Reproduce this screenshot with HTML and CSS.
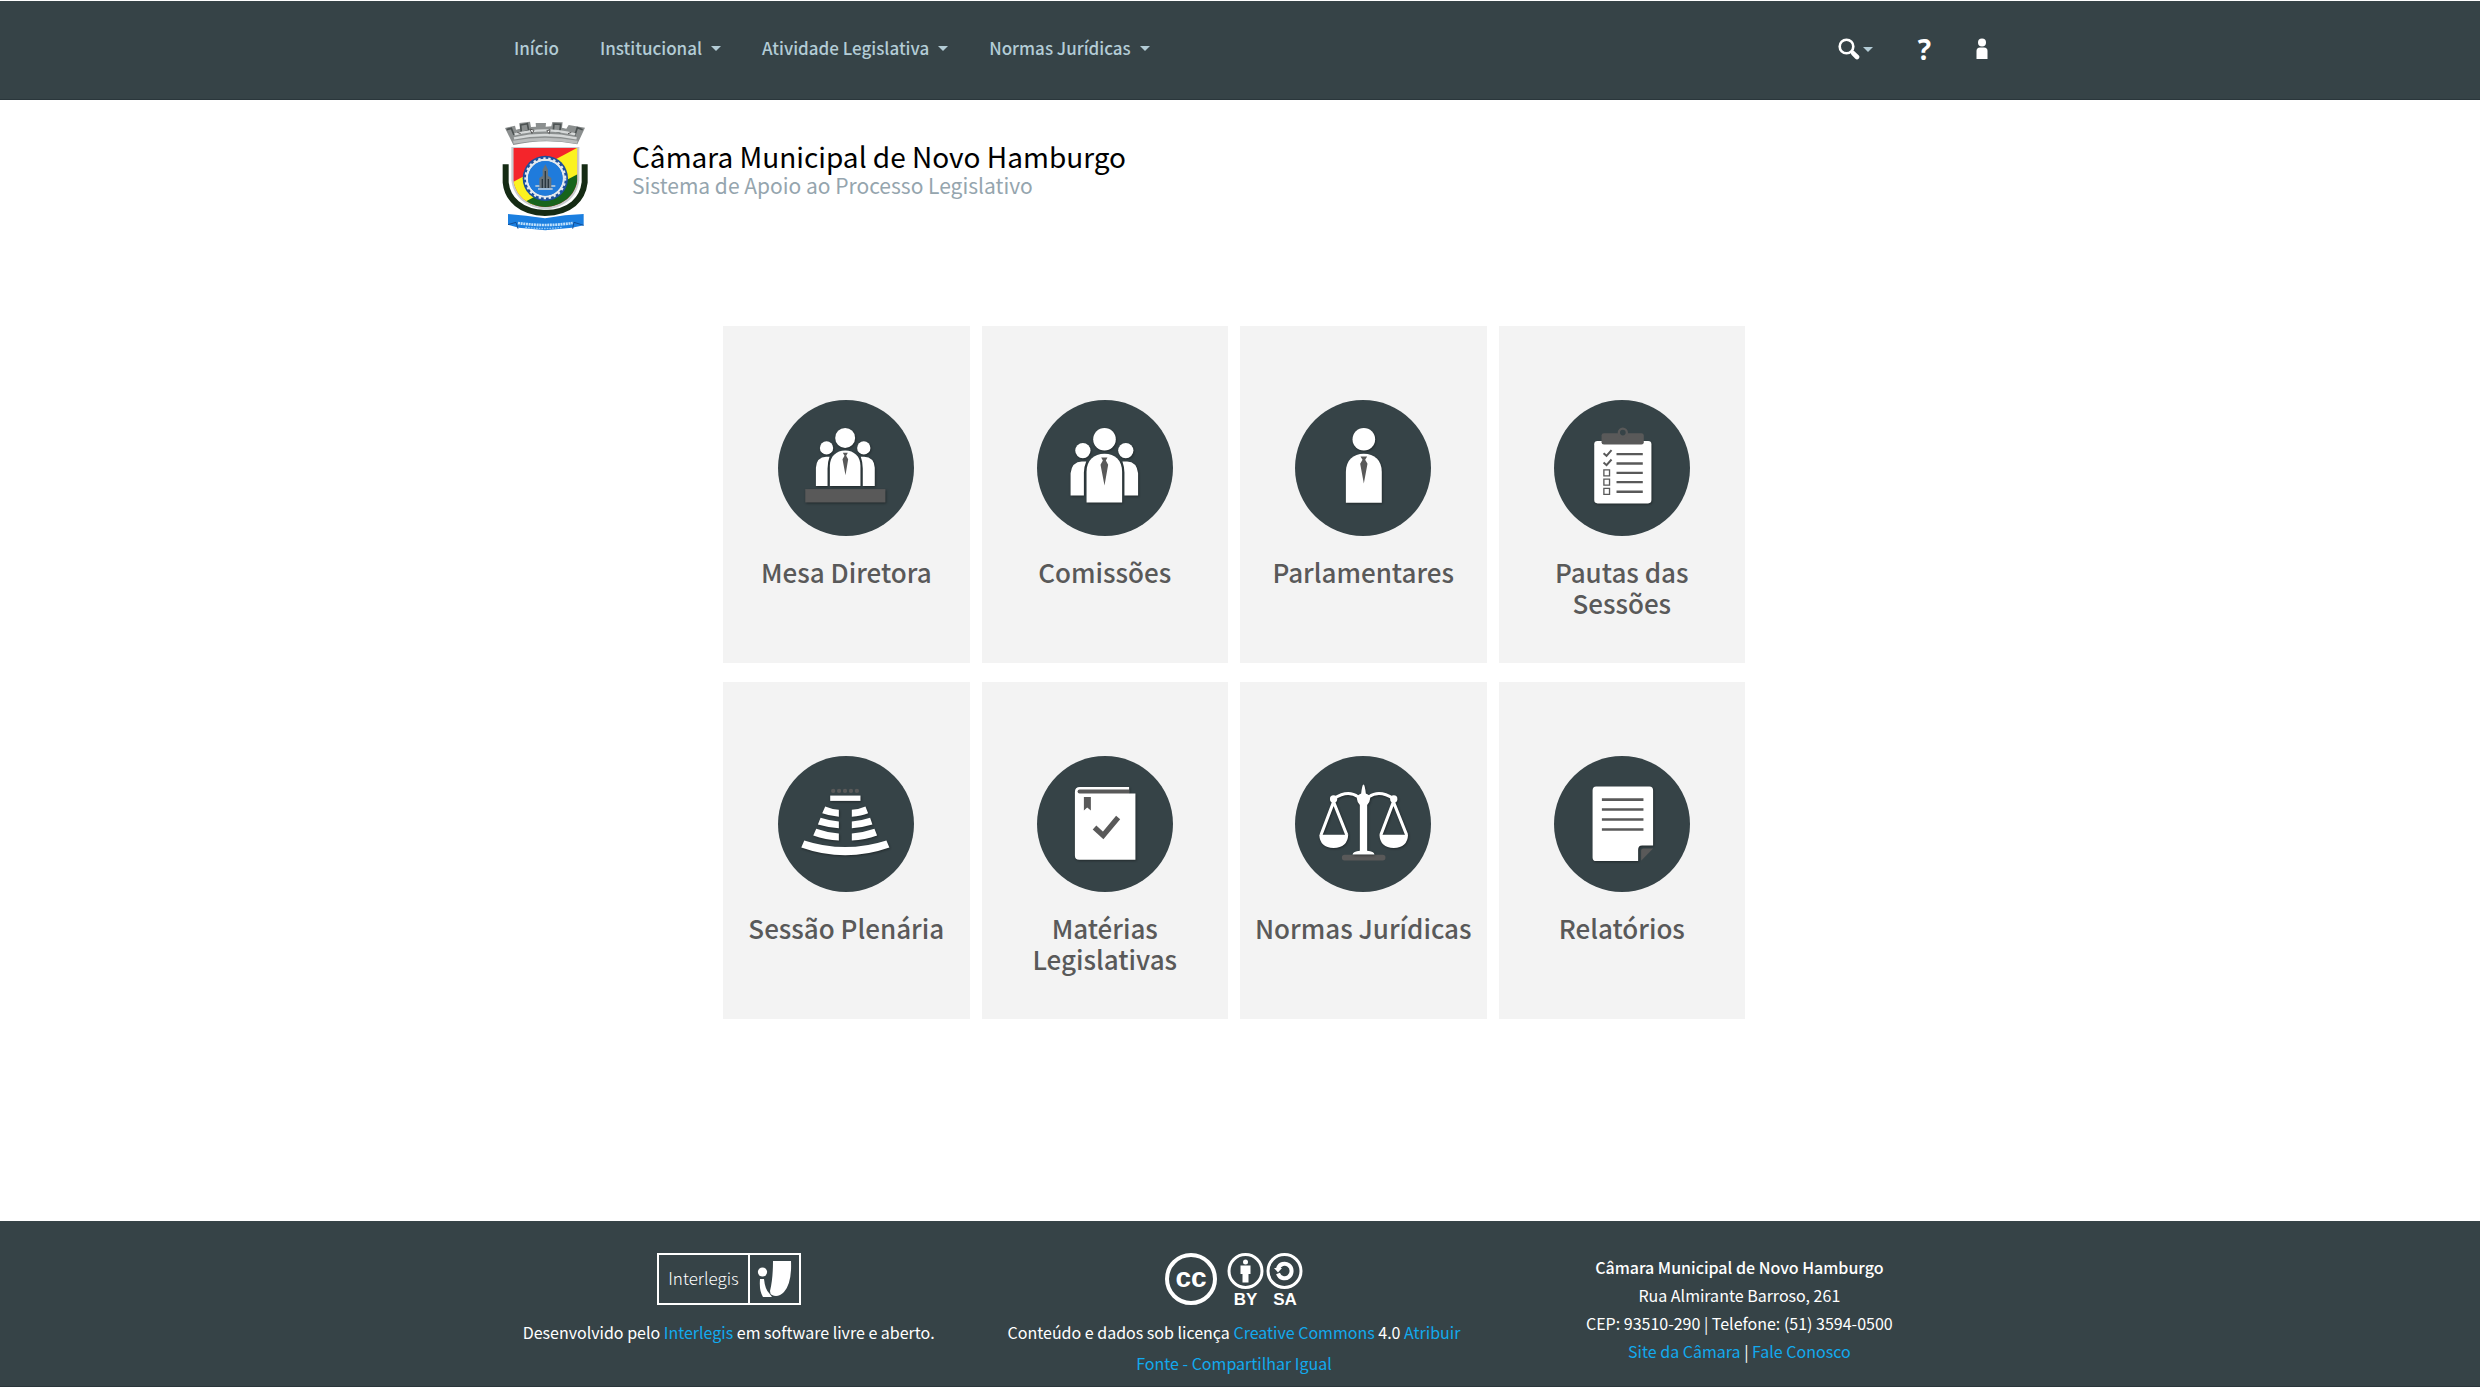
FILE: index.html
```
<!DOCTYPE html>
<html lang="pt-br">
<head>
<meta charset="utf-8">
<title>Câmara Municipal de Novo Hamburgo</title>
<link rel="stylesheet" href="styles.css">
</head>
<body>
<header class="navbar">
  <div class="container navbar-inner">
    <nav class="menu">
      <a href="#">Início</a>
      <a href="#">Institucional <span class="caret"></span></a>
      <a href="#">Atividade Legislativa <span class="caret"></span></a>
      <a href="#">Normas Jurídicas <span class="caret"></span></a>
    </nav>
    <nav class="tools">
      <a href="#" aria-label="Pesquisar"><svg width="22" height="22" viewBox="0 0 22 22"><circle cx="8.500" cy="8.500" r="6.800" fill="none" stroke="#fff" stroke-width="2.600"/><path d="M13 13L15 15" stroke="#fff" stroke-width="3"/><path d="M15.300 15.300L19 19" stroke="#fff" stroke-width="4.600" stroke-linecap="round"/></svg><span class="caret"></span></a>
      <a href="#" class="help" aria-label="Ajuda">?</a>
      <a href="#" aria-label="Entrar"><svg width="12" height="22" viewBox="0 0 12 22"><circle cx="6" cy="4.500" r="4" fill="#fff"/><path d="M0.500 21V13Q0.500 9.500 4 9.500H8Q11.500 9.500 11.500 13V21Z" fill="#fff"/></svg></a>
    </nav>
  </div>
</header>

<div class="container brand">
  <svg class="crest" viewBox="30 25 270 345" role="img" aria-label="Brasão">
    <path d="M45 55L75 48L78 60L90 57L88 40L120 36L123 52L138 51L137 40H168L167 51L184 50L187 37L218 38L216 54L229 57L236 46L285 54L262 104Q165 84 70 106Z" fill="#8b8f8f"/>
    <path d="M50 60L64 56L72 76M92 46L112 42L116 62L94 70ZM192 43L212 44L209 68L190 62ZM278 60L262 54L254 78" fill="none" stroke="#4c5252" stroke-width="5"/>
    <path d="M74 74Q164 50 256 74M72 86Q164 66 260 86" fill="none" stroke="#d5d8d8" stroke-width="7"/>
    <path d="M120 58L132 62L126 72ZM180 60L170 64L178 72ZM82 68L92 72M244 68L234 72" fill="#fff" stroke="#555" stroke-width="3"/>
    <path d="M70 98Q165 80 262 98" fill="none" stroke="#b9bcbc" stroke-width="9"/>
    <path d="M47 164V218C52 268 92 308 165 310C242 308 278 268 284 218V164" fill="none" stroke="#152b14" stroke-width="18"/>
    <path d="M64 112H268V212C262 262 222 296 166 300C108 294 70 262 64 212Z" fill="#c9cdd0"/>
    <clipPath id="shield"><path d="M70 115H262V210C256 258 218 288 166 292C112 288 76 258 70 210Z"/></clipPath>
    <g clip-path="url(#shield)">
      <rect x="60" y="110" width="210" height="190" fill="#f4252b"/>
      <path d="M270 110L60 222V300H110L270 195Z" fill="#fbf220"/>
      <path d="M270 190L94 282V300H270Z" fill="#17641c"/>
    </g>
    <circle cx="166" cy="206" r="68" fill="#1b4f9c"/>
    <circle cx="166" cy="206" r="55" fill="none" stroke="#e3e9ee" stroke-width="7"/>
    <circle cx="166" cy="206" r="59" fill="none" stroke="#e3e9ee" stroke-width="8" stroke-dasharray="7 8"/>
    <circle cx="166" cy="206" r="52" fill="#1f7bdc"/>
    <path d="M148 235V205L158 198V180L166 164L174 180V198L184 205V235Z" fill="#68747c"/>
    <path d="M157 235V208M166 235V184M175 235V208" stroke="#29373f" stroke-width="4"/>
    <path d="M144 238H188M136 229H148M184 229H196" stroke="#c8d3da" stroke-width="4"/>
    <path d="M54 313L108 318L165 326L225 317L281 313V347L246 354L166 362L86 354L54 345Z" fill="#1b7fe0"/>
    <path d="M54 345L78 338L84 357M281 347L252 338L248 357" fill="none" stroke="#124f97" stroke-width="3"/>
    <path d="M84 340Q165 352 248 340" fill="none" stroke="#bfe0fb" stroke-width="8" stroke-dasharray="6 2"/>
    <path d="M106 353Q165 360 216 353" fill="none" stroke="#8cc6f6" stroke-width="4" stroke-dasharray="5 3"/>
  </svg>
  <div class="brand-text">
    <h1>Câmara Municipal de Novo Hamburgo</h1>
    <p>Sistema de Apoio ao Processo Legislativo</p>
  </div>
</div>

<main class="main">
  <div class="cards">
    <a href="#" class="card">
      <svg class="icon" viewBox="175 238 409 409"><circle cx="379.500" cy="442.500" r="204.500" fill="#364347"/>
        <g class="shade" fill="#fff"><circle cx="321" cy="382" r="20"/><circle cx="433" cy="382" r="20"/><path d="M289 497V442Q291 410 320 409H330Q324 425 324 445V497ZM466 497V442Q464 410 434 409H424Q430 425 430 445V497Z"/><circle cx="377" cy="352" r="30"/><path d="M331 497V436C331 408 350 390 377 390C404 390 423 408 423 436V497Z"/></g>
        <path d="M370 397H385L380 406L386 416L378 464L369 416L375 406Z" fill="#595959"/><rect class="shade" x="257" y="506" width="241" height="40" fill="#595959"/></svg>
      <span>Mesa Diretora</span></a>
    <a href="#" class="card">
      <svg class="icon" viewBox="949 238 409 409"><circle cx="1153.500" cy="442.500" r="204.500" fill="#364347"/>
        <g class="shade" fill="#fff"><circle cx="1087" cy="390" r="23"/><circle cx="1216" cy="390" r="23"/><path d="M1050 525V458Q1054 424 1084 423H1097Q1090 440 1090 456V525ZM1253 525V458Q1249 424 1220 423H1206Q1212 440 1212 456V525Z"/><circle cx="1152" cy="356" r="34"/><path d="M1098 546V454C1098 420 1120 400 1152 400C1184 400 1205 420 1205 454V546Z"/></g>
        <path d="M1142 411H1161L1156 420L1163 433L1152 495L1140 433L1147 420Z" fill="#595959"/></svg>
      <span>Comissões</span></a>
    <a href="#" class="card">
      <svg class="icon" viewBox="175 238 409 409"><circle cx="379.500" cy="442.500" r="204.500" fill="#364347"/>
        <g class="shade" fill="#fff"><circle cx="382" cy="356" r="34"/><path d="M328 547V454C328 420 350 400 382 400C414 400 436 420 436 454V547Z"/></g>
        <path d="M372 408H392L386 418L393 430L382 489L371 430L378 418Z" fill="#595959"/></svg>
      <span>Parlamentares</span></a>
    <a href="#" class="card">
      <svg class="icon" viewBox="949 238 409 409"><circle cx="1153.500" cy="442.500" r="204.500" fill="#364347"/>
        <rect class="shade" x="1070" y="361" width="172" height="188" rx="10" fill="#fff"/>
        <rect x="1092" y="338" width="127" height="34" rx="7" fill="#595959"/><circle cx="1156" cy="336" r="12" fill="#364347" stroke="#595959" stroke-width="7"/>
        <path d="M1137 401H1216M1137 429H1216M1137 457H1216M1137 485H1216M1137 514H1216" stroke="#595959" stroke-width="7"/>
        <path d="M1098 398L1107 406L1122 389M1098 426L1107 434L1122 417" fill="none" stroke="#595959" stroke-width="6"/>
        <path d="M1099 448H1116V466H1099ZM1099 476H1116V494H1099ZM1099 504H1116V522H1099Z" fill="none" stroke="#595959" stroke-width="4"/></svg>
      <span>Pautas das Sessões</span></a>
    <a href="#" class="card">
      <svg class="icon" viewBox="175 224 409 409"><circle cx="379.500" cy="428.500" r="204.500" fill="#364347"/>
        <path d="M341 329H414" fill="none" stroke="#595959" stroke-width="13" stroke-linecap="round" stroke-dasharray="0 17.800"/>
        <g class="shade" fill="#fff"><rect x="332" y="343" width="91" height="16"/><path d="M317 376Q336 384 358 386V407Q330 404 308 396ZM303 410Q330 419 358 421V441Q325 439 295 430ZM290 443Q324 455 358 457V478Q318 476 281 463ZM438 376Q420 384 397 386V407Q426 404 446 396ZM452 410Q426 419 397 421V441Q430 439 459 430ZM465 443Q430 455 397 457V478Q437 476 473 463ZM254 478Q377 518 501 478L510 499Q377 546 245 499Z"/></g></svg>
      <span>Sessão Plenária</span></a>
    <a href="#" class="card">
      <svg class="icon" viewBox="949 224 409 409"><circle cx="1153.500" cy="428.500" r="204.500" fill="#364347"/>
        <path class="shade" d="M1226 337H1245V536H1076Q1063 536 1063 523V332Q1063 317 1078 317H1226Z" fill="#fff"/>
        <path d="M1226 325H1077Q1071 325 1071 331Q1071 337 1077 337H1226Z" fill="#595959"/>
        <path d="M1090 347H1111V388L1100 379L1090 388Z" fill="#595959"/><path d="M1122 439L1148 463L1193 409" fill="none" stroke="#595959" stroke-width="16"/></svg>
      <span>Matérias Legislativas</span></a>
    <a href="#" class="card">
      <svg class="icon" viewBox="175 224 409 409"><circle cx="379.500" cy="428.500" r="204.500" fill="#364347"/>
        <rect x="316" y="521" width="131" height="17" rx="8" fill="#595959"/>
        <g class="shade"><g fill="#fff"><path d="M381 310Q385 310 388 337Q402 342 401 352Q400 364 392 371V509Q413 511 414 520H348Q350 511 370 509V371Q362 364 361 352Q361 342 374 337Q377 310 381 310Z"/><circle cx="291" cy="353" r="11"/><circle cx="472" cy="353" r="11"/><path d="M248 461H335Q333 500 291 501Q250 500 248 461ZM429 461H515Q513 500 472 501Q431 500 429 461Z"/></g>
        <path d="M365 347C344 332 320 334 292 352M397 347C418 332 443 334 471 352M291 362L253 462M291 362L331 462M471 362L433 462M471 362L511 462" fill="none" stroke="#fff" stroke-width="9"/></g></svg>
      <span>Normas Jurídicas</span></a>
    <a href="#" class="card">
      <svg class="icon" viewBox="949 224 409 409"><circle cx="1153.500" cy="428.500" r="204.500" fill="#364347"/>
        <path class="shade" d="M1076 316H1236Q1247 316 1247 328V493H1214Q1202 493 1202 506V540H1076Q1065 540 1065 529V328Q1065 316 1076 316Z" fill="#fff"/>
        <path d="M1211 539V508Q1211 502 1218 502H1247Z" fill="#595959"/>
        <path d="M1093 355H1218M1093 385H1218M1093 415H1218M1093 445H1218" stroke="#595959" stroke-width="8"/></svg>
      <span>Relatórios</span></a>
  </div>
</main>

<footer class="footer">
  <div class="container footer-grid">
    <div class="footer-col">
      <svg width="144" height="56" viewBox="0 0 144 56" role="img" aria-label="Interlegis">
        <path d="M1 1H143V51H1ZM92 1V51" fill="none" stroke="#fff" stroke-width="2"/>
        <text x="46.500" y="32" class="logo-text">Interlegis</text>
        <circle cx="105.500" cy="19" r="4.600" fill="#fff"/><path d="M103 26H107Q108 36 112 40L115 44H106Q102 38 103 26Z" fill="#fff"/>
        <path d="M116 8H134Q135 30 127 39Q121 45 115 42Q113 41 113 38Q116 26 116 8Z" fill="#fff"/>
      </svg>
      <p>Desenvolvido pelo <a href="#">Interlegis</a> em software livre e aberto.</p>
    </div>
    <div class="footer-col">
      <svg width="138" height="56" viewBox="0 0 138 56" role="img" aria-label="Creative Commons BY-SA">
        <circle cx="26" cy="26" r="24" fill="none" stroke="#fff" stroke-width="4"/>
        <text x="26" y="34" class="cc-text">cc</text>
        <circle cx="80.500" cy="18" r="16.500" fill="none" stroke="#fff" stroke-width="3"/>
        <circle cx="80.500" cy="9" r="2.500" fill="#fff"/><path d="M75.500 12.500H85.500V21H83.500V29.500H77.500V21H75.500Z" fill="#fff"/>
        <circle cx="119.500" cy="18" r="16.500" fill="none" stroke="#fff" stroke-width="3"/>
        <path d="M113 15.500A7 7.300 0 1 1 113 20.500" fill="none" stroke="#fff" stroke-width="4"/><path d="M109 15H117L113 19.500Z" fill="#fff"/>
        <text x="80.500" y="52" class="cc-label">BY</text><text x="120" y="52" class="cc-label">SA</text>
      </svg>
      <p>Conteúdo e dados sob licença <a href="#">Creative Commons</a> 4.0 <a href="#">Atribuir Fonte - Compartilhar Igual</a></p>
    </div>
    <address class="footer-col">
      <strong>Câmara Municipal de Novo Hamburgo</strong>
      <span>Rua Almirante Barroso, 261</span>
      <span>CEP: 93510-290 | Telefone: (51) 3594-0500</span>
      <span><a href="#">Site da Câmara</a> | <a href="#">Fale Conosco</a></span>
    </address>
  </div>
</footer>
</body>
</html>
```
FILE: styles.css
```
* { box-sizing: border-box; }

body {
  display: flex;
  flex-direction: column;
  min-height: 100vh;
  margin: 0;
  padding: 1px 0;
  background: #fff;
  color: #000;
  font-family: "Noto Sans CJK SC", "Open Sans", sans-serif;
  font-size: 16px;
}

a { color: #12aaee; text-decoration: none; }
h1, p { margin: 0; }
svg { display: block; flex: none; }

.container {
  width: 100%;
  max-width: 1528px;
  margin: 0 auto;
  padding: 0 12px 0 0;
}

.navbar { background: #364347; border-bottom: 1px solid #2a363b; }

.navbar-inner {
  display: flex;
  justify-content: space-between;
  min-height: 98px;
  padding: 32px 16px 0 38px;
}

.menu, .tools { display: flex; align-items: flex-start; }
.menu { gap: 41px; }
.tools { gap: 45px; }

.menu a, .tools a {
  display: flex;
  align-items: center;
  gap: 9px;
  height: 32px;
  color: #b3ccd6;
  font-size: 17px;
  font-weight: 500;
  line-height: 32px;
}

.menu a { height: 30px; line-height: 30px; }
.tools a { gap: 3px; }

.tools .help {
  color: #fff;
  font-family: "Open Sans", sans-serif;
  font-size: 28px;
  font-weight: 700;
}

.caret {
  border: 5px solid transparent;
  border-top-color: #b3ccd6;
  border-bottom: 0;
}

.brand {
  display: flex;
  gap: 42px;
  padding: 18px 12px 0 24px;
}

.crest { width: 90px; height: 115px; }
.brand-text { padding-top: 20px; }

.brand h1 {
  font-size: 28px;
  font-weight: 400;
  line-height: 36px;
}

.brand p {
  color: #95a5ae;
  font-size: 21px;
  font-weight: 400;
  line-height: 22px;
}

.main { flex: 1; padding: 93px 12px 0 0; }

.cards {
  display: grid;
  grid-template-columns: repeat(4, 1fr);
  gap: 19px 12px;
  max-width: 1022px;
  margin: 0 auto;
}

.card {
  display: flex;
  flex-direction: column;
  align-items: center;
  gap: 20px;
  min-height: 337px;
  padding: 74px 12px 20px;
  background: #f3f3f3;
  color: #595959;
  font-size: 26px;
  font-weight: 500;
  line-height: 31px;
  text-align: center;
}

.icon { width: 136px; height: 136px; }
.shade { filter: drop-shadow(2px 3px 3px rgba(0, 0, 0, 0.4)); }

.footer {
  background: #364347;
  border-bottom: 1px solid #2a363b;
  color: #fff;
}

.footer-grid {
  display: grid;
  grid-template-columns: repeat(3, 1fr);
  min-height: 165px;
}

.footer-col {
  display: flex;
  flex-direction: column;
  align-items: center;
  gap: 8px;
  padding: 32px 24px 0;
  font-style: normal;
  line-height: 31px;
  text-align: center;
}

address.footer-col { gap: 0; line-height: 28px; }
.footer-col strong { font-weight: 500; }

.logo-text {
  fill: #fff;
  font-size: 17px;
  font-weight: 300;
  text-anchor: middle;
}

.cc-text, .cc-label {
  fill: #fff;
  font-family: "Liberation Sans", Arial, sans-serif;
  font-weight: 700;
  text-anchor: middle;
}

.cc-text { font-size: 28px; }
.cc-label { font-size: 17px; }
```
